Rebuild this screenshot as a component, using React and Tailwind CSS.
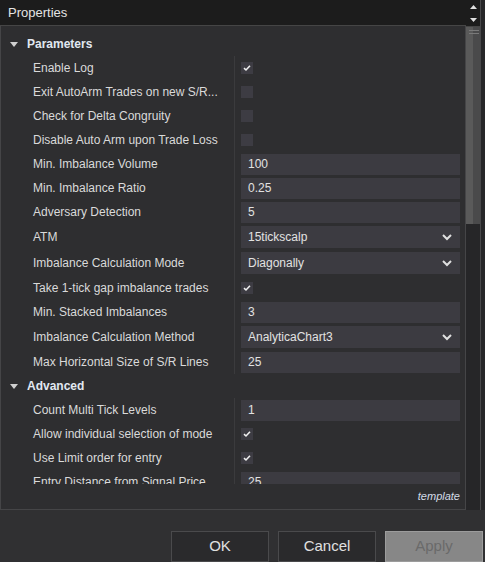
import React from "react";

const params = [
  { label: "Enable Log", type: "check", value: true },
  { label: "Exit AutoArm Trades on new S/R...", type: "check", value: false },
  { label: "Check for Delta Congruity", type: "check", value: false },
  { label: "Disable Auto Arm upon Trade Loss", type: "check", value: false },
  { label: "Min. Imbalance Volume", type: "text", value: "100" },
  { label: "Min. Imbalance Ratio", type: "text", value: "0.25" },
  { label: "Adversary Detection", type: "text", value: "5" },
  { label: "ATM", type: "select", value: "15tickscalp" },
  { label: "Imbalance Calculation Mode", type: "select", value: "Diagonally" },
  { label: "Take 1-tick gap imbalance trades", type: "check", value: true },
  { label: "Min. Stacked Imbalances", type: "text", value: "3" },
  { label: "Imbalance Calculation Method", type: "select", value: "AnalyticaChart3" },
  { label: "Max Horizontal Size of S/R Lines", type: "text", value: "25" },
];

const advanced = [
  { label: "Count Multi Tick Levels", type: "text", value: "1" },
  { label: "Allow individual selection of mode", type: "check", value: true },
  { label: "Use Limit order for entry", type: "check", value: true },
  { label: "Entry Distance from Signal Price", type: "text", value: "25" },
];

function Check({ on }) {
  return (
    <div className="w-[12px] h-[12px] bg-[#3d3c43] flex items-center justify-center">
      {on && (
        <svg width="8" height="8" viewBox="0 0 8 8">
          <path d="M1 4.2 L3 6 L7 1.8" stroke="#f0f0f0" strokeWidth="1.6" fill="none" />
        </svg>
      )}
    </div>
  );
}

function Row({ item }) {
  const tall = item.type === "select";
  return (
    <div className={`flex items-center ${tall ? "h-[26px]" : "h-[24px]"}`}>
      <div className="w-[233px] pl-[32px] text-[12px] text-[#dadada] whitespace-nowrap overflow-hidden">
        {item.label}
      </div>
      <div className="w-[226px] h-full flex items-center border-l border-[#3b3b3d] pl-[6px]">
        {item.type === "check" && <Check on={item.value} />}
        {item.type === "text" && (
          <div className="w-[220px] h-[21px] bg-[#3c3b41] flex items-center pl-[7px] text-[12px] text-[#e2e2e2]">
            {item.value}
          </div>
        )}
        {item.type === "select" && (
          <div className="w-[220px] h-[22px] bg-[#3c3b41] flex items-center justify-between pl-[7px] pr-[8px] text-[12px] text-[#e2e2e2]">
            <span>{item.value}</span>
            <svg width="10" height="7" viewBox="0 0 10 7">
              <path d="M1 1 L5 5 L9 1" stroke="#e0e0e0" strokeWidth="2" fill="none" />
            </svg>
          </div>
        )}
      </div>
    </div>
  );
}

function Section({ title, items }) {
  return (
    <div>
      <div className="h-[24px] flex items-center pl-[9px] gap-[9px]">
        <svg width="8" height="5" viewBox="0 0 8 5">
          <path d="M0 0 L8 0 L4 5 Z" fill="#d0d0d0" />
        </svg>
        <span className="text-[12px] font-bold text-[#e1e8f0]">{title}</span>
      </div>
      {items.map((item) => (
        <Row key={item.label} item={item} />
      ))}
    </div>
  );
}

export default function App() {
  return (
    <div
      className="w-[485px] h-[562px] bg-[#303032] overflow-hidden flex flex-col"
      style={{ fontFamily: '"Liberation Sans", Arial, sans-serif' }}
    >
      <div className="flex h-[512px]">
        {/* Properties panel */}
        <div className="w-[466px] flex flex-col">
          <div className="h-[26px] bg-[#1c1c1c] flex items-center pl-[8px] text-[13px] text-[#e4e4e4] border-b border-[#454545]">
            Properties
          </div>
          <div className="flex-1 flex flex-col border-l border-b border-r border-[#454547] bg-[#2e2e30]">
            <div className="h-[458px] overflow-hidden pt-[6px]">
              <Section title="Parameters" items={params} />
              <Section title="Advanced" items={advanced} />
            </div>
            <div className="flex-1 flex items-center justify-end pr-[5px] text-[11px] italic text-[#d4dce6]">
              template
            </div>
          </div>
        </div>

        {/* scroll column */}
        <div className="w-[15px] flex flex-col bg-[#262628] border-r border-[#48484a]">
          <div className="h-[27px] bg-[#1c1c1c] border-b border-[#454545] flex flex-col items-center justify-center gap-[9px]">
            <svg width="7" height="4" viewBox="0 0 7 4">
              <path d="M0 4 L3.5 0 L7 4 Z" fill="#e0e0e0" />
            </svg>
            <svg width="7" height="4" viewBox="0 0 7 4">
              <path d="M0 0 L3.5 4 L7 0 Z" fill="#e0e0e0" />
            </svg>
          </div>
          <div className="h-[197px] flex">
            <div className="w-[7px] bg-[#5a5a5a]" />
            <div className="flex-1 bg-[#4a4a4b] relative">
              <div className="absolute left-[-4px] top-[3px] w-[10px] h-[1px] bg-[#7a7a7a]" />
              <div className="absolute left-[-4px] top-[6px] w-[10px] h-[1px] bg-[#7a7a7a]" />
            </div>
          </div>
        </div>
        <div className="flex-1 bg-[#262628]" />
      </div>

      {/* buttons */}
      <div className="flex justify-end gap-[9px] pr-[2px] pt-[21px]">
        <button className="w-[98px] h-[31px] bg-[#2a2a2c] border border-[#4a4a4c] text-[15px] text-[#e0e0e0]">
          OK
        </button>
        <button className="w-[98px] h-[31px] bg-[#2a2a2c] border border-[#4a4a4c] text-[15px] text-[#e0e0e0]">
          Cancel
        </button>
        <button className="w-[98px] h-[31px] bg-[#878787] border border-[#9c9c9c] text-[15px] text-[#6a6a6a]">
          Apply
        </button>
      </div>
    </div>
  );
}
